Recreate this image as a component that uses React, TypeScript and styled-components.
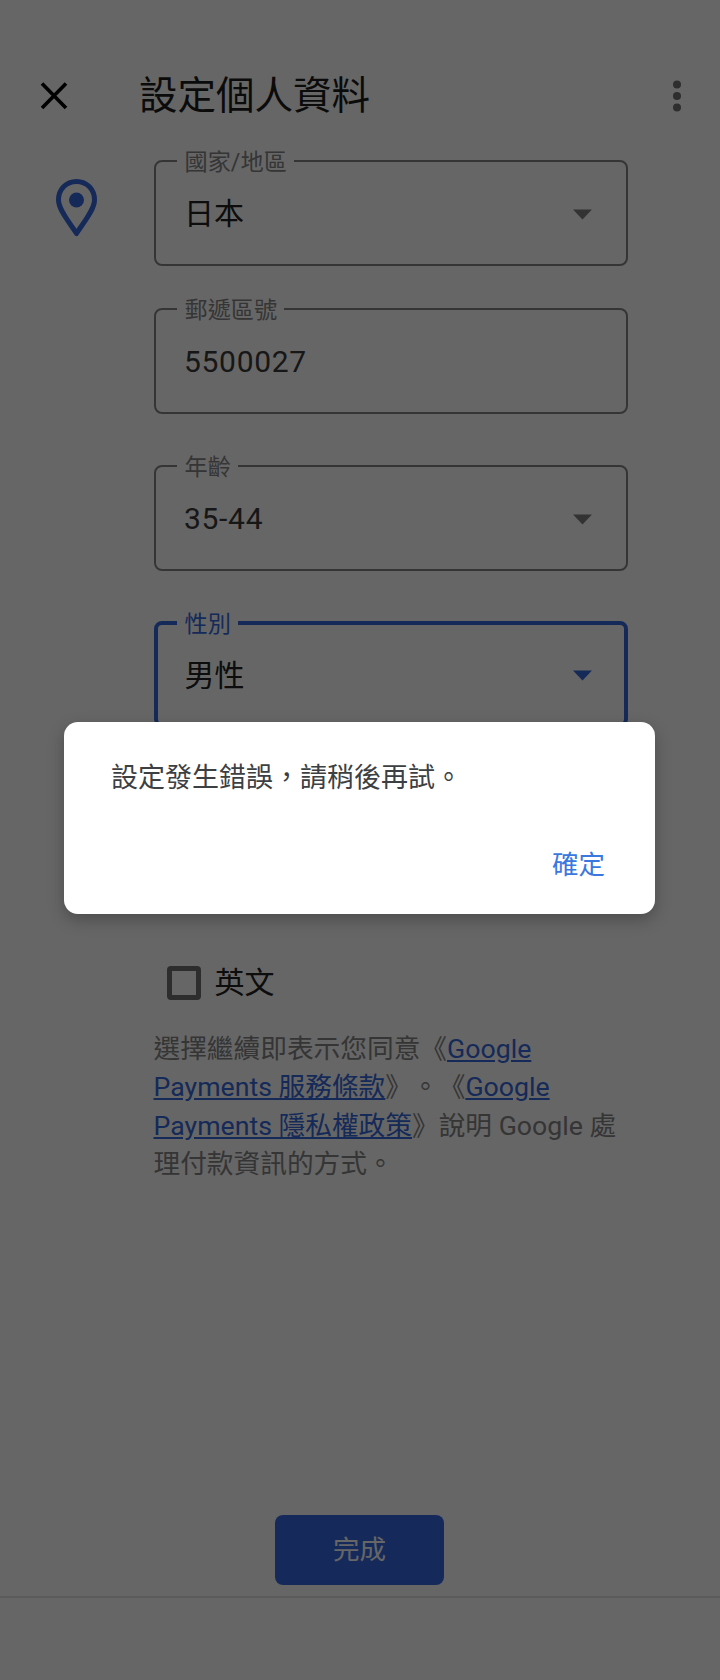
import React from "react";
import styled, { createGlobalStyle } from "styled-components";

const Global = createGlobalStyle`
  html, body { margin: 0; padding: 0; background: #fff; }
  * { box-sizing: border-box; }
  body { font-family: Roboto, "Noto Sans CJK TC", sans-serif; }
`;

const Page = styled.div`
  position: relative;
  width: 720px;
  height: 1680px;
  overflow: hidden;
  display: flex;
  flex-direction: column;
  background: #fff;
`;

const Header = styled.header`
  height: 160px;
  flex: none;
  padding: 70px 38px 0 40px;
  display: flex;
  align-items: flex-start;
`;

const CloseButton = styled.svg`
  width: 28px;
  height: 52px;
  flex: none;
`;

const Title = styled.h1`
  margin: 0 0 0 71px;
  flex: 1;
  font-size: 38.5px;
  line-height: 52px;
  font-weight: 400;
  color: #1c1c1c;
`;

const MoreButton = styled.svg`
  width: 10px;
  height: 52px;
  flex: none;
`;

const Body = styled.main`
  display: flex;
  align-items: flex-start;
`;

const PinColumn = styled.div`
  width: 153.5px;
  flex: none;
  padding: 19px 0 0 56px;
  display: flex;
`;

const Form = styled.div`
  width: 474px;
  display: flex;
  flex-direction: column;
`;

const Field = styled.div<{ $focused?: boolean; $gap: number }>`
  position: relative;
  height: 106px;
  margin-bottom: ${(p) => p.$gap}px;
  padding: ${(p) => (p.$focused ? "3px 32px 0 27px" : "2px 34px 0 28.5px")};
  display: flex;
  align-items: center;
  justify-content: space-between;
  border: ${(p) => (p.$focused ? "4px solid #3569dc" : "2.5px solid #868686")};
  border-radius: 8px;
`;

const FieldLabel = styled.label<{ $focused?: boolean }>`
  position: absolute;
  top: ${(p) => (p.$focused ? "-16px" : "-15px")};
  left: ${(p) => (p.$focused ? "19px" : "21px")};
  padding: 0 7px 0 8px;
  background: #fff;
  font-size: 23.2px;
  line-height: 30px;
  color: ${(p) => (p.$focused ? "#3569dc" : "#868686")};
`;

const FieldValue = styled.span<{ $latin?: boolean }>`
  font-size: 30px;
  line-height: 40px;
  letter-spacing: ${(p) => (p.$latin ? "0.7px" : "0")};
  color: ${(p) => (p.$latin ? "#3a3a3a" : "#222")};
`;

const Caret = styled.svg`
  width: 19px;
  height: 11px;
  flex: none;
`;

const CheckRow = styled.div`
  margin: 0 0 26.5px 13px;
  height: 40px;
  display: flex;
  align-items: center;
  gap: 14px;
`;

const CheckBox = styled.span`
  width: 34px;
  height: 34px;
  flex: none;
  border: 5px solid #707070;
  border-radius: 4px;
`;

const CheckText = styled.span`
  font-size: 30px;
  line-height: 40px;
  color: #222;
`;

const Legal = styled.p`
  margin: 0;
  width: 473px;
  font-size: 26.7px;
  line-height: 38.6px;
  color: #868686;
  text-spacing-trim: space-all;
`;

const LegalLink = styled.a`
  color: #3569dc;
  text-decoration: underline;
`;

const Footer = styled.footer`
  margin-top: auto;
  flex: none;
  height: 165px;
  display: flex;
  flex-direction: column;
  align-items: center;
`;

const DoneButton = styled.button`
  width: 169px;
  height: 70px;
  flex: none;
  margin-right: 1px;
  padding: 0 0 6px;
  border: 0;
  border-radius: 8px;
  background: #3569e4;
  color: #fff;
  font-family: inherit;
  font-size: 26.5px;
`;

const Divider = styled.div`
  width: 100%;
  height: 2px;
  margin-top: 11px;
  background: #e4e4e4;
`;

const Scrim = styled.div`
  position: absolute;
  inset: 0;
  padding: 722px 65px 0 64px;
  background: rgba(0, 0, 0, 0.6);
`;

const Dialog = styled.div`
  height: 192px;
  padding: 36px 47px 0;
  display: flex;
  flex-direction: column;
  border-radius: 14px;
  background: #fff;
  box-shadow: 0 6px 16px rgba(0, 0, 0, 0.25);
`;

const DialogText = styled.p`
  margin: 0;
  font-size: 27px;
  line-height: 40px;
  color: #3c4043;
`;

const DialogAction = styled.button`
  align-self: flex-end;
  margin: 46.5px 3px 0 0;
  padding: 0;
  border: 0;
  background: none;
  font-family: inherit;
  font-size: 26.5px;
  line-height: 40px;
  color: #3a78e0;
`;

const CaretIcon = ({ color }: { color: string }) => (
  <Caret viewBox="0 0 19 11">
    <path d="M0 0.500h19L9.500 10.500z" fill={color} />
  </Caret>
);

export default function App() {
  return (
    <Page>
      <Global />
      <Header>
        <CloseButton viewBox="0 0 28 52">
          <path d="M2 13.5 26 38M26 13.5 2 38" stroke="#000" strokeWidth="3.6" fill="none" />
        </CloseButton>
        <Title>設定個人資料</Title>
        <MoreButton viewBox="0 0 10 52">
          <circle cx="5" cy="14.5" r="4" fill="#747474" />
          <circle cx="5" cy="26" r="4" fill="#747474" />
          <circle cx="5" cy="37.5" r="4" fill="#747474" />
        </MoreButton>
      </Header>
      <Body>
        <PinColumn>
          <svg width="41" height="58" viewBox="0 0 41 58">
            <path
              d="M20.5 2.500C10 2.500 2.500 10.500 2.500 21c0 10 11.500 23 18 33.500C27 44 38.500 31 38.500 21 38.500 10.500 31 2.500 20.500 2.500z"
              fill="none"
              stroke="#3569dc"
              strokeWidth="5"
              strokeLinejoin="round"
            />
            <circle cx="20.5" cy="21" r="7.500" fill="#3569dc" />
          </svg>
        </PinColumn>
        <Form>
          <Field $gap={42}>
            <FieldLabel>國家/地區</FieldLabel>
            <FieldValue>日本</FieldValue>
            <CaretIcon color="#808080" />
          </Field>
          <Field $gap={51}>
            <FieldLabel>郵遞區號</FieldLabel>
            <FieldValue $latin>5500027</FieldValue>
          </Field>
          <Field $gap={50}>
            <FieldLabel>年齡</FieldLabel>
            <FieldValue $latin>35-44</FieldValue>
            <CaretIcon color="#808080" />
          </Field>
          <Field $focused $gap={236}>
            <FieldLabel $focused>性別</FieldLabel>
            <FieldValue>男性</FieldValue>
            <CaretIcon color="#3569dc" />
          </Field>
          <CheckRow>
            <CheckBox />
            <CheckText>英文</CheckText>
          </CheckRow>
          <Legal>
            選擇繼續即表示您同意《<LegalLink>Google Payments 服務條款</LegalLink>》。《
            <LegalLink>Google Payments 隱私權政策</LegalLink>》說明 Google 處理付款資訊的方式。
          </Legal>
        </Form>
      </Body>
      <Footer>
        <DoneButton>完成</DoneButton>
        <Divider />
      </Footer>
      <Scrim>
        <Dialog>
          <DialogText>設定發生錯誤，請稍後再試。</DialogText>
          <DialogAction>確定</DialogAction>
        </Dialog>
      </Scrim>
    </Page>
  );
}
